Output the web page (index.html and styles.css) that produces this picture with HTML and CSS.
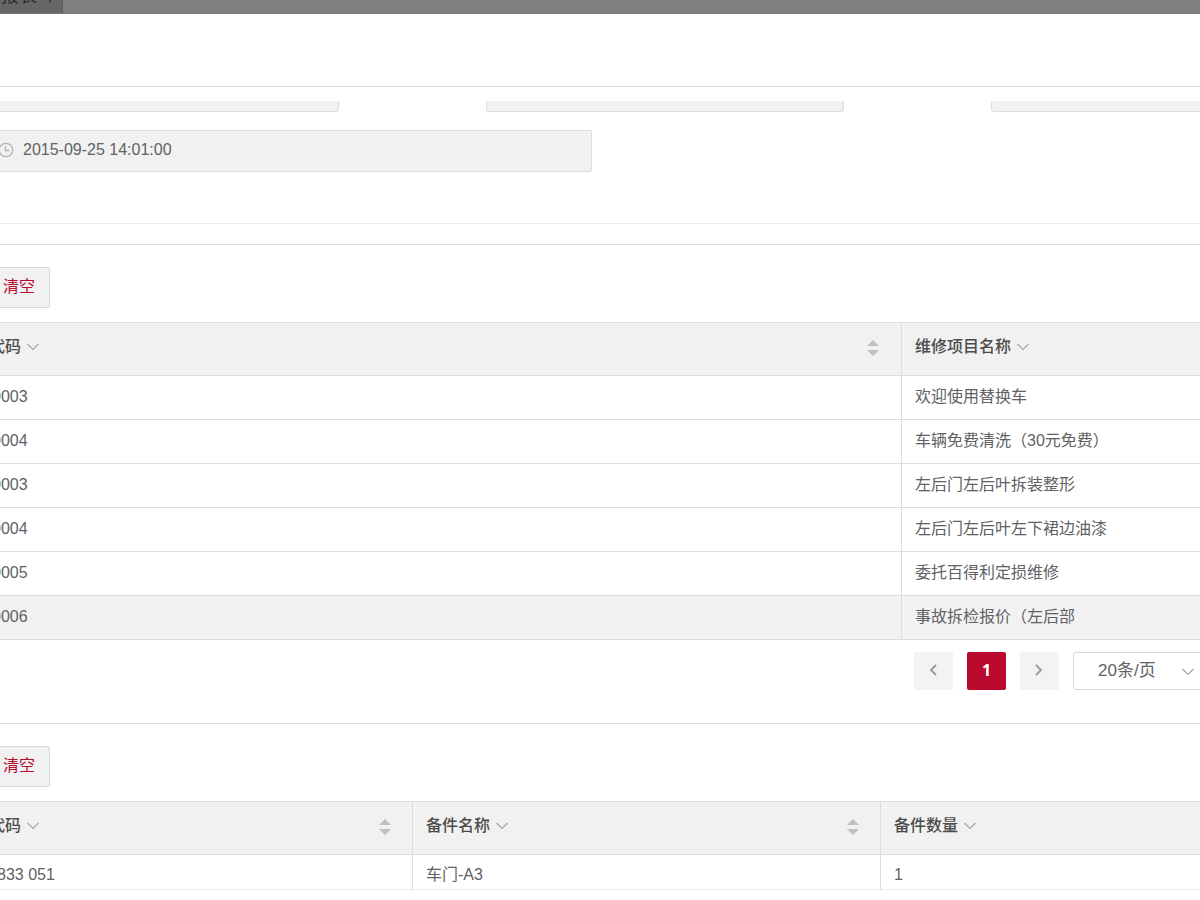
FILE: index.html
```html
<!DOCTYPE html>
<html lang="zh-CN">
<head>
<meta charset="utf-8">
<title>维修项目</title>
<link rel="stylesheet" href="styles.css">
</head>
<body>
<svg class="defs" aria-hidden="true">
  <symbol id="chevron" viewBox="0 0 12 8"><path d="M0.5 1 6 6.5 11.5 1" fill="none" stroke="currentColor" stroke-width="1.1"/></symbol>
  <symbol id="sort" viewBox="0 0 12 16"><path d="M6 0 12 6H0ZM0 10H12L6 16Z" fill="currentColor"/></symbol>
</svg>
<div class="topbar">
  <div class="tab"><span>报表</span><svg class="tab-icon" viewBox="0 0 8 8"><path d="M1 3 4 6 7 3M4 6V8" fill="none" stroke="currentColor"/></svg></div>
</div>
<main class="dialog">
  <header class="dialog-header"></header>
  <section class="form">
    <div class="fields">
      <input class="field" aria-label="字段一" readonly>
      <input class="field" aria-label="字段二" readonly>
      <input class="field" aria-label="字段三" readonly>
    </div>
    <div class="date">
      <svg class="clock" viewBox="0 0 16 16"><circle cx="8" cy="8" r="6.7" fill="none" stroke="currentColor" stroke-width="1.3"/><path d="M7.5 4V8.5H11.5" fill="none" stroke="currentColor" stroke-width="1.3"/></svg>
      <input class="date-input" aria-label="日期时间" value="2015-09-25 14:01:00" readonly>
    </div>
  </section>
  <section class="panel">
    <button class="clear" type="button">清空</button>
    <table class="grid">
      <colgroup><col class="item-code"><col></colgroup>
      <thead>
        <tr>
          <th><div class="head"><span>代码</span><svg class="chevron"><use href="#chevron"/></svg><svg class="sort"><use href="#sort"/></svg></div></th>
          <th><div class="head"><span>维修项目名称</span><svg class="chevron"><use href="#chevron"/></svg></div></th>
        </tr>
      </thead>
      <tbody>
        <tr><td class="number">0003</td><td>欢迎使用替换车</td></tr>
        <tr><td class="number">0004</td><td>车辆免费清洗（30元免费）</td></tr>
        <tr><td class="number">0003</td><td>左后门左后叶拆装整形</td></tr>
        <tr><td class="number">0004</td><td>左后门左后叶左下裙边油漆</td></tr>
        <tr><td class="number">0005</td><td>委托百得利定损维修</td></tr>
        <tr class="current"><td class="number">0006</td><td>事故拆检报价（左后部</td></tr>
      </tbody>
    </table>
    <nav class="pager" aria-label="分页">
      <button class="page" type="button" aria-label="上一页"><svg viewBox="0 0 8 12"><path d="M7 1 2 6 7 11" fill="none" stroke="currentColor" stroke-width="1.8"/></svg></button>
      <button class="page active" type="button">1</button>
      <button class="page" type="button" aria-label="下一页"><svg viewBox="0 0 8 12"><path d="M1 1 6 6 1 11" fill="none" stroke="currentColor" stroke-width="1.8"/></svg></button>
      <div class="size">
        <select aria-label="每页条数"><option>20条/页</option></select>
        <svg class="chevron"><use href="#chevron"/></svg>
      </div>
    </nav>
  </section>
  <section class="panel">
    <button class="clear" type="button">清空</button>
    <table class="grid parts">
      <colgroup><col class="part-code"><col class="part-name"><col></colgroup>
      <thead>
        <tr>
          <th><div class="head"><span>代码</span><svg class="chevron"><use href="#chevron"/></svg><svg class="sort"><use href="#sort"/></svg></div></th>
          <th><div class="head"><span>备件名称</span><svg class="chevron"><use href="#chevron"/></svg><svg class="sort"><use href="#sort"/></svg></div></th>
          <th><div class="head"><span>备件数量</span><svg class="chevron"><use href="#chevron"/></svg></div></th>
        </tr>
      </thead>
      <tbody>
        <tr><td class="part-number">833 051</td><td>车门-A3</td><td>1</td></tr>
      </tbody>
    </table>
  </section>
</main>
</body>
</html>
```

FILE: styles.css
```css
* { box-sizing: border-box; }

body {
  margin: 0;
  overflow: hidden;
  background: #fff;
  color: #606266;
  font: 16px/20px "Liberation Sans", "Noto Sans CJK SC", sans-serif;
}

button, input, select { font: inherit; color: inherit; }

.defs { position: absolute; width: 0; height: 0; }

.topbar {
  display: flex;
  align-items: flex-end;
  height: 14px;
  overflow: hidden;
  background: #7f7f7f;
  border-bottom: 1px solid #777;
}

.tab {
  display: flex;
  align-items: flex-end;
  gap: 9px;
  padding: 0 8px 7px 1px;
  background: #666;
  border-right: 1px solid #5c5c5c;
  color: #2c2c2c;
  font-size: 18px;
}

.tab-icon { width: 8px; height: 8px; margin-bottom: 3px; }

/* The dialog is wider than the window on both sides. */
.dialog { margin: 0 -25px; }

.dialog-header { height: 73px; border-bottom: 1px solid #dcdcdc; }

.form { padding: 14px 0 51px 6px; border-bottom: 1px solid #ebebeb; }

.fields {
  display: flex;
  align-items: flex-end;
  gap: 147px;
  height: 11px;
  overflow: hidden;
}

.field {
  flex: 0 0 358px;
  height: 42px;
  background: #f1f1f1;
  border: 1px solid #dcdcdc;
  border-radius: 3px;
}

.date {
  display: flex;
  align-items: center;
  gap: 9px;
  width: 49.1%;
  height: 42px;
  margin-top: 18px;
  padding: 0 10px 2px 16px;
  background: #f1f1f1;
  border: 1px solid #dcdcdc;
  border-radius: 2px;
}

.clock { flex: none; width: 16px; height: 16px; color: #b4b4b4; }

.date-input {
  flex: 1;
  min-width: 0;
  padding: 0;
  border: 0;
  background: none;
  outline: 0;
}

.panel { margin-top: 20px; padding-top: 22px; border-top: 1px solid #dcdcdc; }
.panel + .panel { margin-top: 33px; }

.clear {
  display: block;
  height: 41px;
  margin: 0 0 14px 13px;
  padding: 0 14px 2px;
  background: #f1f1f1;
  border: 1px solid #d8d8d8;
  border-radius: 2px;
  color: #b50b30;
}

.grid {
  width: 100%;
  table-layout: fixed;
  border-collapse: separate;
  border-spacing: 0;
  border-top: 1px solid #dfdfdf;
}

.item-code { width: 74.16%; }
.part-code { width: 35.04%; }
.part-name { width: 37.44%; }

th, td {
  padding: 0 14px;
  border-right: 1px solid #dcdcdc;
  border-bottom: 1px solid #dcdcdc;
  text-align: left;
}

th + th, td + td { padding-left: 13px; }

th {
  height: 53px;
  padding-bottom: 4px;
  background: #f1f1f1;
  color: #4c4c4c;
  font-weight: 500;
}

td { height: 44px; padding-bottom: 2px; white-space: nowrap; }

.number { padding-left: 17px; }
.part-number { padding-left: 22px; }
.current td { background: #f2f2f2; }

.head { display: flex; align-items: center; gap: 6px; }

.chevron { width: 12px; height: 8px; color: #a5a5a5; }

.sort { width: 12px; height: 16px; margin: 2px 8px 0 auto; color: #c0c0c0; }

.parts .sort { margin-right: 7px; }

.parts td { height: 35px; padding-top: 6px; padding-bottom: 0; border-bottom-color: #ebebeb; }

.pager {
  display: flex;
  justify-content: flex-end;
  gap: 14px;
  margin-top: 12px;
  padding-right: 12px;
}

.page {
  display: flex;
  align-items: center;
  justify-content: center;
  width: 39px;
  height: 38px;
  padding: 0 2px 2px 0;
  background: #f3f3f3;
  border: 0;
  border-radius: 2px;
  color: #999;
}

.page svg { width: 8px; height: 12px; }

.page.active {
  padding-right: 0;
  background: #b9092d;
  color: #fff;
  font-family: "Open Sans", sans-serif;
  font-weight: 700;
}

.size { position: relative; width: 140px; height: 38px; }

.size select {
  width: 100%;
  height: 100%;
  padding: 0 24px;
  appearance: none;
  background: #fff;
  border: 1px solid #d8d8d8;
  border-radius: 3px;
  font-size: 17px;
}

.size .chevron { position: absolute; top: 16px; right: 19px; }
```
